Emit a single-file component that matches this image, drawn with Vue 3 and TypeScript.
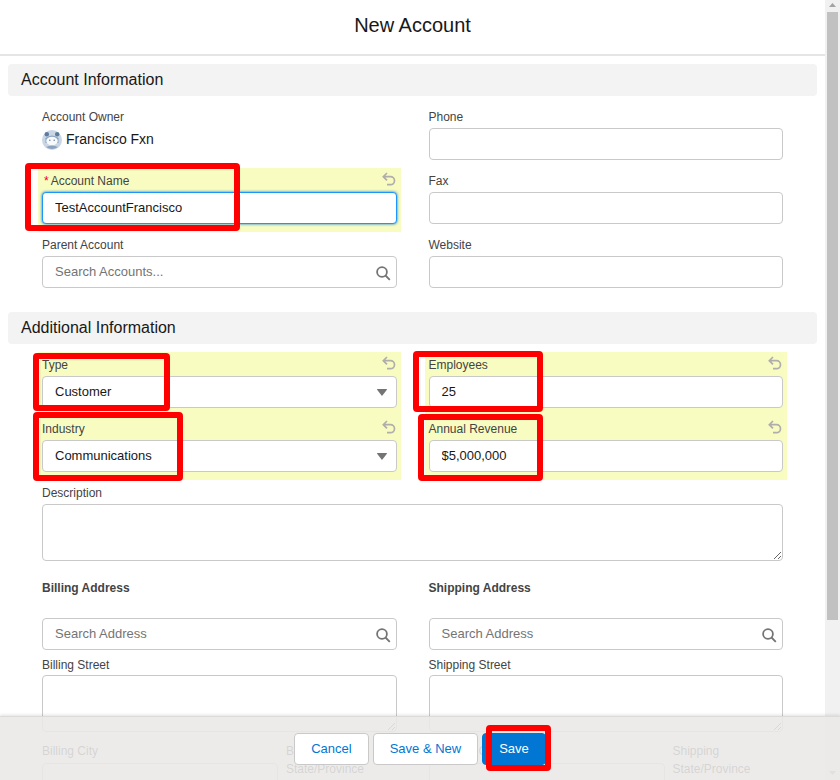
<script setup lang="ts">
interface Field {
  label: string
  kind: 'text' | 'lookup' | 'select'
  value?: string
  placeholder?: string
  changed?: boolean
  required?: boolean
  focused?: boolean
}

const accountLeft: Field[] = [
  { label: 'Account Name', kind: 'text', value: 'TestAccountFrancisco', changed: true, required: true, focused: true },
  { label: 'Parent Account', kind: 'lookup', placeholder: 'Search Accounts...' }
]
const accountRight: Field[] = [
  { label: 'Phone', kind: 'text' },
  { label: 'Fax', kind: 'text' },
  { label: 'Website', kind: 'text' }
]
const additional: Field[] = [
  { label: 'Type', kind: 'select', value: 'Customer', changed: true },
  { label: 'Employees', kind: 'text', value: '25', changed: true },
  { label: 'Industry', kind: 'select', value: 'Communications', changed: true },
  { label: 'Annual Revenue', kind: 'text', value: '$5,000,000', changed: true }
]
const addresses = ['Billing', 'Shipping']
const marks = ['m-name', 'm-type', 'm-industry', 'm-employees', 'm-revenue', 'm-save']
</script>

<template>
  <div class="page">
    <div class="main">
      <header class="head"><h1 class="title">New Account</h1></header>

      <h2 class="bar">Account Information</h2>
      <div class="grid">
        <div class="col">
          <div class="field owner">
            <div class="lab"><span>Account Owner</span></div>
            <div class="owner-val">
              <svg class="avatar" width="20" height="20" viewBox="0 0 20 20">
                <circle cx="10" cy="10" r="10" fill="#c9d6e5" />
                <circle cx="4.800" cy="4.200" r="2.200" fill="#5b7b9f" />
                <circle cx="15.200" cy="4.200" r="2.200" fill="#5b7b9f" />
                <path d="M3.500 8 Q10 3 16.500 8 L16.500 13 L3.500 13 Z" fill="#8aa2bd" />
                <ellipse cx="10" cy="11" rx="5.800" ry="4.200" fill="#f7f9fb" />
                <circle cx="7.800" cy="10.300" r=".8" fill="#6c88a8" />
                <circle cx="12.200" cy="10.300" r=".8" fill="#6c88a8" />
                <path d="M4 17 Q10 13.800 16 17 Q10 21 4 17 Z" fill="#8aa2bd" />
              </svg>
              <span class="owner-name">Francisco Fxn</span>
            </div>
          </div>
          <div v-for="f in accountLeft" :key="f.label" class="field" :class="{ changed: f.changed }">
            <div class="lab">
              <span><i v-if="f.required" class="req">*</i>{{ f.label }}</span>
              <svg v-if="f.changed" class="undo" width="14" height="14" viewBox="0 0 14 14" fill="none">
                <path d="M5 1 1.300 4.700 5 8.400M1.700 4.700h6.800a4 4 0 0 1 0 8H5" />
              </svg>
            </div>
            <div class="ctl">
              <input class="inp" :class="{ focus: f.focused, lookup: f.kind === 'lookup' }" :value="f.value" :placeholder="f.placeholder" />
              <svg v-if="f.kind === 'lookup'" class="search" width="15" height="15" viewBox="0 0 15 15" fill="none">
                <circle cx="6" cy="6" r="4.900" /><path d="M9.500 9.500 13.800 13.800" />
              </svg>
            </div>
          </div>
        </div>
        <div class="col">
          <div v-for="f in accountRight" :key="f.label" class="field">
            <div class="lab"><span>{{ f.label }}</span></div>
            <div class="ctl"><input class="inp" /></div>
          </div>
        </div>
      </div>

      <h2 class="bar second">Additional Information</h2>
      <div class="grid">
        <div v-for="f in additional" :key="f.label" class="field" :class="{ changed: f.changed }">
          <div class="lab">
            <span>{{ f.label }}</span>
            <svg class="undo" width="14" height="14" viewBox="0 0 14 14" fill="none">
              <path d="M5 1 1.300 4.700 5 8.400M1.700 4.700h6.800a4 4 0 0 1 0 8H5" />
            </svg>
          </div>
          <div class="ctl">
            <input class="inp" :value="f.value" />
            <svg v-if="f.kind === 'select'" class="caret" width="10" height="7" viewBox="0 0 10 7"><path d="M.5 0h9a.5.5 0 0 1 .4.800L5 7 .1.800A.5.5 0 0 1 .5 0z" /></svg>
          </div>
        </div>
        <div class="field wide">
          <div class="lab"><span>Description</span></div>
          <textarea class="area"></textarea>
        </div>
        <div v-for="a in addresses" :key="a" class="addr">
          <div class="addr-title">{{ a }} Address</div>
          <div class="ctl">
            <input class="inp lookup" placeholder="Search Address" />
            <svg class="search" width="15" height="15" viewBox="0 0 15 15" fill="none">
              <circle cx="6" cy="6" r="4.900" /><path d="M9.500 9.500 13.800 13.800" />
            </svg>
          </div>
          <div class="lab street"><span>{{ a }} Street</span></div>
          <textarea class="area"></textarea>
          <div class="city-row">
            <div>
              <div class="lab"><span>{{ a }} City</span></div>
              <input class="inp city" />
            </div>
            <div class="lab-wrap">{{ a }} State/Province</div>
          </div>
        </div>
      </div>
    </div>

    <div class="scroll">
      <svg class="arrow" width="7" height="4" viewBox="0 0 7 4"><path d="M0 4h7L3.500 0z" /></svg>
      <div class="thumb"></div>
      <svg class="arrow down" width="7" height="4" viewBox="0 0 7 4"><path d="M0 0h7L3.500 4z" /></svg>
    </div>

    <footer class="foot">
      <button class="btn">Cancel</button>
      <button class="btn">Save &amp; New</button>
      <button class="btn brand">Save</button>
    </footer>

    <div v-for="m in marks" :key="m" class="mark" :class="m"></div>
  </div>
</template>

<style>
html, body { margin: 0; overflow: hidden; background: #fff; }
</style>

<style scoped>
.page {
  position: relative;
  display: flex;
  width: 840px;
  height: 780px;
  overflow: hidden;
  font-family: "Liberation Sans", Arial, sans-serif;
  color: #181818;
  background: #fff;
}
.main { flex: 1; min-width: 0; height: 780px; overflow: hidden; }
.head {
  height: 49px;
  padding-bottom: 5px;
  border-bottom: 2px solid #e5e5e5;
  display: flex;
  justify-content: center;
  align-items: center;
}
.title { margin: 0; font-size: 20px; font-weight: 400; line-height: 24px; }
.bar {
  margin: 8px;
  height: 32px;
  padding-left: 13px;
  background: #f3f3f3;
  border-radius: 4px;
  font-size: 16px;
  font-weight: 400;
  line-height: 32px;
}
.bar.second { margin-top: 16px; }
.grid {
  display: grid;
  grid-template-columns: 1fr 1fr;
  column-gap: 24px;
  width: 749px;
  margin-left: 38px;
}
.field { padding: 4px 4px 8px; height: 64px; box-sizing: border-box; }
.field.changed { background: #f9fcc1; }
.field.wide { grid-column: 1 / -1; height: auto; padding-bottom: 14px; }
.lab {
  display: flex;
  justify-content: space-between;
  align-items: flex-start;
  height: 18px;
  margin-bottom: 2px;
  font-size: 12px;
  line-height: 18px;
  color: #444;
}
.req { font-style: normal; color: #ea001e; margin: 0 2px; }
.undo { stroke: #b0adab; stroke-width: 1.7; margin: 0 1px 0 0; }
.owner-val {
  display: flex;
  align-items: center;
  gap: 4px;
  height: 20px;
  margin-top: 4px;
  font-size: 14px;
}
.owner-name { margin-bottom: 2px; }
.avatar { display: block; }
.ctl { position: relative; }
.inp {
  display: block;
  width: 100%;
  height: 32px;
  box-sizing: border-box;
  padding: 0 12px 2px;
  border: 1px solid #c9c9c9;
  border-radius: 4px;
  background: #fff;
  font: 13px "Liberation Sans", Arial, sans-serif;
  color: #181818;
  outline: none;
}
.inp::placeholder { color: #747474; opacity: 1; }
.inp.focus { border-color: #1b96ff; box-shadow: 0 0 3px #0176d3; }
.search {
  position: absolute;
  right: 6px;
  top: 10px;
  stroke: #747474;
  stroke-width: 1.8;
}
.caret { position: absolute; right: 10px; top: 13px; fill: #747474; }
.area {
  display: block;
  width: 100%;
  height: 57px;
  box-sizing: border-box;
  padding: 6px 12px;
  border: 1px solid #c9c9c9;
  border-radius: 4px;
  font: 13px "Liberation Sans", Arial, sans-serif;
  outline: none;
}
.addr { padding: 0 4px; }
.addr-title {
  margin-top: 4px;
  margin-bottom: 21px;
  font-size: 12px;
  font-weight: 700;
  line-height: 18px;
  color: #444;
}
.street { margin-top: 6px; margin-bottom: 1px; }
.city-row {
  display: grid;
  grid-template-columns: 236px 1fr;
  column-gap: 8px;
  margin-top: 10px;
  font-size: 12px;
}
.city { margin-top: 3px; }
.lab-wrap { font-size: 12px; line-height: 18px; color: #444; }
.scroll {
  position: relative;
  flex: 0 0 15px;
  background: #f1f1f1;
  height: 780px;
}
.arrow { position: absolute; left: 4px; top: 3px; fill: #a3a3a3; }
.arrow.down { top: auto; bottom: 5px; }
.thumb {
  position: absolute;
  top: 12px;
  left: 2px;
  width: 11px;
  height: 608px;
  background: #c1c1c1;
}
.foot {
  position: absolute;
  left: 0;
  right: 0;
  bottom: 0;
  height: 64px;
  box-sizing: border-box;
  display: flex;
  justify-content: center;
  align-items: flex-start;
  gap: 4px;
  padding-top: 16px;
  background: rgba(233, 232, 231, .88);
  border-top: 1px solid #dcdbda;
  box-shadow: 0 -1px 3px rgba(0, 0, 0, .12);
}
.btn {
  height: 32px;
  padding: 0 16px 2px;
  border: 1px solid #c9c9c9;
  border-radius: 4px;
  background: #fff;
  font: 13px "Liberation Sans", Arial, sans-serif;
  color: #0176d3;
}
.btn.brand { background: #0176d3; border-color: #0176d3; color: #fff; }
.mark {
  position: absolute;
  box-sizing: border-box;
  border: 6px solid #ff0000;
  border-radius: 4px;
  pointer-events: none;
}
.m-name { left: 25px; top: 163px; width: 215px; height: 68px; }
.m-type { left: 33px; top: 353px; width: 137px; height: 58px; }
.m-industry { left: 33px; top: 412px; width: 150px; height: 69px; }
.m-employees { left: 413px; top: 351px; width: 130px; height: 61px; }
.m-revenue { left: 418px; top: 414px; width: 125px; height: 67px; }
.m-save { left: 486px; top: 725px; width: 65px; height: 46px; }
</style>
